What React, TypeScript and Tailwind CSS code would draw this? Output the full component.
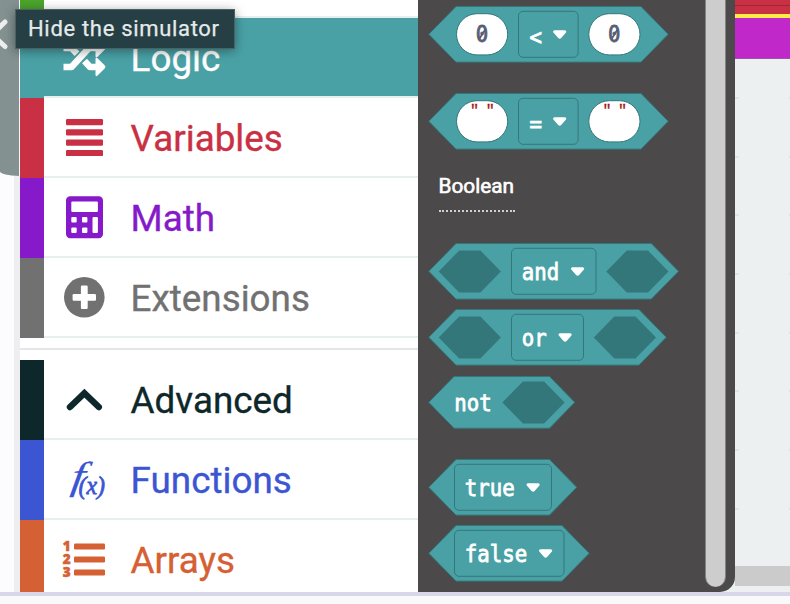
import type { ReactNode } from "react";

const TEAL = "#49a1a6";
const EDGE = "#34777b";

function Glyph({ children }: { children: ReactNode }) {
  return (
    <svg className="overflow-visible" width="44" height="44" viewBox="0 0 44 44" fill="currentColor">
      {children}
    </svg>
  );
}

function ShuffleIcon() {
  return (
    <Glyph>
      <g fill="none" stroke="currentColor" strokeWidth="6.6" strokeLinejoin="round">
        <path d="M1.500 31H9.500L27 12H36" />
        <path d="M1.500 12H9.500L15 17.800" />
        <path d="M22.500 25 28 31H36" />
      </g>
      <path d="M33.500 4q0-2 1.800-1l7.600 7.800q1.100 1.400 0 2.600l-7.600 7.600q-1.800 1-1.800-1zM33.500 23q0-2 1.800-1l7.600 7.600q1.100 1.300 0 2.600l-7.600 7.600q-1.800 1-1.800-1z" />
    </Glyph>
  );
}

function BarsIcon() {
  return (
    <Glyph>
      {[3, 13.2, 23.6, 33.9].map((y) => (
        <rect key={y} x="4" y={y} width="37" height="6.2" rx="1.2" />
      ))}
    </Glyph>
  );
}

function CalculatorIcon() {
  return (
    <Glyph>
      <rect x="4" y=".3" width="37" height="42" rx="4.200" />
      <g fill="white">
        <rect x="9.300" y="5.500" width="26.600" height="10.600" rx="1.100" />
        <rect x="9.300" y="21" width="5.400" height="5.400" rx="1" />
        <rect x="20" y="21" width="5.400" height="5.400" rx="1" />
        <rect x="9.300" y="31.600" width="5.400" height="5.400" rx="1" />
        <rect x="20" y="31.600" width="5.400" height="5.400" rx="1" />
        <rect x="30.500" y="21" width="5.400" height="16" rx="1" />
      </g>
    </Glyph>
  );
}

function PlusIcon() {
  return (
    <Glyph>
      <circle cx="22.300" cy="21.300" r="20.300" />
      <g fill="white">
        <rect x="10.600" y="18" width="23.400" height="6.800" rx="1.200" />
        <rect x="18.900" y="9.600" width="6.800" height="23.400" rx="1.200" />
      </g>
    </Glyph>
  );
}

function ChevronIcon() {
  return (
    <Glyph>
      <path d="M8 29 22.400 15.100 36.800 29" fill="none" stroke="currentColor" strokeWidth="6.400" strokeLinecap="round" />
    </Glyph>
  );
}

function FunctionIcon() {
  return (
    <Glyph>
      <g stroke="currentColor" fontFamily="'Liberation Serif', serif" fontStyle="italic">
        <text transform="translate(8 31) skewX(-8) scale(1.25 1)" fontSize="39" strokeWidth=".1">f</text>
        <text x="16.500" y="36" fontSize="26" strokeWidth=".8" textLength="26.500" lengthAdjust="spacingAndGlyphs">(x)</text>
      </g>
    </Glyph>
  );
}

function NumberedIcon() {
  return (
    <Glyph>
      {[5.4, 18.4, 31.4].map((y, i) => (
        <g key={y}>
          <rect x="12" y={y} width="31" height="6" rx="1.200" />
          <text x=".800" y={y + 8} fontSize="13.500" fontWeight="800" fontFamily="'Open Sans', sans-serif" stroke="currentColor" strokeWidth=".5">{i + 1}</text>
        </g>
      ))}
    </Glyph>
  );
}

type RowProps = { label: string; icon: ReactNode; strip: string; text: string; active?: boolean; last?: boolean };

function Row({ label, icon, strip, text, active, last }: RowProps) {
  return (
    <div className={`flex shrink-0 ${last ? "h-[72px]" : "h-20"}`}>
      <div className={`w-6 ${strip}`} />
      <div className={`flex flex-1 border-[#e9eeef] ${last ? "" : "border-b-2"} ${active ? "bg-[#49a1a6]" : ""} ${text}`}>
        <div className="flex h-20 w-20 items-center justify-center">{icon}</div>
        <div className="pl-[6.600px] text-[36.800px] leading-[82px] whitespace-nowrap [-webkit-text-stroke:0.35px_currentColor]">{label}</div>
      </div>
    </div>
  );
}

function Block({ right, height = 56.6, slope = 28, children }: { right: number; height?: number; slope?: number; children: ReactNode }) {
  const m = height / 2;
  return (
    <svg className="block shrink-0 overflow-visible" width={right} height={height}>
      <polygon
        points={`.8,${m} ${slope},.5 ${right - slope},.5 ${right - 0.8},${m} ${right - slope},${height - 0.5} ${slope},${height - 0.5}`}
        fill={TEAL}
        stroke={EDGE}
      />
      {children}
    </svg>
  );
}

function Slot({ x, y = 7.5 }: { x: number; y?: number }) {
  return <polygon fill={EDGE} points={`${x},${y + 21} ${x + 20.5},${y} ${x + 41.7},${y} ${x + 62.2},${y + 21} ${x + 41.7},${y + 42} ${x + 20.5},${y + 42}`} />;
}

function Mono({ x, y, children, fill = "white" }: { x: number; y: number; children: string; fill?: string }) {
  return (
    <text transform={`translate(${x} ${y}) scale(.9 1)`} fontSize="23" fill={fill} stroke={fill} strokeWidth=".8" fontFamily="'DejaVu Sans Mono', monospace">
      {children}
    </text>
  );
}

function Menu({ x, w, label }: { x: number; w: number; label: string }) {
  const c = x + w - 25.2;
  const symbol = label.length === 1;
  return (
    <>
      <rect x={x} y="5.3" width={w} height="46" rx="4.5" fill="none" stroke={EDGE} />
      <Mono x={x + (symbol ? 10.9 : 10.3)} y={symbol ? 38.6 : 36.5}>{label}</Mono>
      <path d={`M${c + 1.5} 24.2h10.6q2.2 1 .8 2.6l-4.6 5.300q-1.500 1.300-3 0l-4.600-5.300q-1.400-1.600.8-2.6z`} fill="white" />
    </>
  );
}

function Pill({ x, text }: { x: number; text?: boolean }) {
  return (
    <>
      <rect x={x} y="7.7" width="51.2" height="41.2" rx="20.6" fill="white" stroke={EDGE} />
      {text ? (
        <g fill="#a31515" stroke="#a31515" strokeWidth=".3" fontSize="15" fontFamily="'Liberation Mono', monospace">
          <text x={x + 13.6} y="21.500">"</text>
          <text x={x + 29.3} y="21.500">"</text>
        </g>
      ) : (
        <>
          <Mono x={x + 19.3} y={36.3} fill="#575e75">0</Mono>
          <path d={`M${x + 22.4} 33.5l7-11`} stroke="#575e75" strokeWidth="1.8" />
        </>
      )}
    </>
  );
}

const ticks = [0, 1, 2, 3, 4, 5, 6, 7];

export default function App() {
  return (
    <div className="relative h-[604px] w-[790px] overflow-hidden bg-[#f9f9f9] font-['Roboto',sans-serif]">
      <div className="flex h-[592px]">
        <div className="flex w-5 shrink-0 bg-[#fcfcff]">
          <div className="h-[176px] w-[19px] shrink-0 rounded-bl-[20px_5px] bg-[#839191]">
            <svg className="block" width="16" height="60" fill="none" stroke="#eeeeee" strokeWidth="5" strokeLinecap="round">
              <path d="M5 22-8 34.500 5 46.500" />
            </svg>
          </div>
          <div className="-ml-[5px] mt-[176px] w-1.5 shrink-0 bg-[#eeeef1]" />
        </div>
        <div className="flex w-[398px] shrink-0 flex-col bg-white">
          <div className="h-[18px] shrink-0 border-b-2 border-[#e9eeef]">
            <div className="h-[18px] w-6 bg-[#4ba42b]" />
          </div>
          <Row label="Logic" icon={<ShuffleIcon />} strip="bg-[#49a1a6]" text="text-white" active />
          <Row label="Variables" icon={<BarsIcon />} strip="bg-[#c93044]" text="text-[#c93044]" />
          <Row label="Math" icon={<CalculatorIcon />} strip="bg-[#8619c9]" text="text-[#8619c9]" />
          <Row label="Extensions" icon={<PlusIcon />} strip="bg-[#717171]" text="text-[#717171]" />
          <div className="mb-2.5 h-3 shrink-0 border-b-2 border-[#e4e6e7]" />
          <Row label="Advanced" icon={<ChevronIcon />} strip="bg-[#0d272a]" text="text-[#0d272a]" />
          <Row label="Functions" icon={<FunctionIcon />} strip="bg-[#3b55d3]" text="text-[#3b55d3]" />
          <Row label="Arrays" icon={<NumberedIcon />} strip="bg-[#d56033]" text="text-[#d56033]" last />
        </div>
        <div className="flex flex-1 bg-[#ecf0f1]">
          <div className="flex w-[317px] shrink-0 rounded-br-[15px] bg-[#4b4949]">
            <div className="flex w-[287px] flex-col pt-[6px] pl-[10px]">
              <Block right={241}>
                <Pill x={28.5} />
                <Menu x={90.5} w={59.6} label="<" />
                <Pill x={160.8} />
              </Block>
              <div className="h-[30.7px] shrink-0" />
              <Block right={241}>
                <Pill x={28.5} text />
                <Menu x={90.5} w={59.6} label="=" />
                <Pill x={160.8} text />
              </Block>
              <div className="mt-[24px] ml-[10.5px] h-[38.500px] w-[76px] shrink-0 border-b-2 border-dotted border-[#d0d0d0] text-[20.800px] leading-[24px] whitespace-nowrap text-white [-webkit-text-stroke:0.6px_white]">
                Boolean
              </div>
              <div className="h-[30.4px] shrink-0" />
              <Block right={251.3}>
                <Slot x={10.7} />
                <Menu x={83.5} w={84.5} label="and" />
                <Slot x={178.3} />
              </Block>
              <div className="h-[9.900px] shrink-0" />
              <Block right={239}>
                <Slot x={10.7} />
                <Menu x={83.5} w={72} label="or" />
                <Slot x={165.8} />
              </Block>
              <div className="h-[9.700px] shrink-0" />
              <Block right={147.5} height={52.7} slope={26}>
                <Mono x={26.3} y={34.8}>not</Mono>
                <Slot x={74.4} y={5.4} />
              </Block>
              <div className="h-[30.500px] shrink-0" />
              <Block right={149.5}>
                <Menu x={26.5} w={97} label="true" />
              </Block>
              <div className="h-[9.900px] shrink-0" />
              <Block right={162}>
                <Menu x={26.5} w={109.5} label="false" />
              </Block>
            </div>
            <div className="mb-[5px] w-[21px] rounded-b-full border-x border-[#858484] bg-[#cdcdcd]" />
          </div>
          <div className="flex flex-1 flex-col">
            <div className="h-[14px] shrink-0 bg-[#c93044] pt-[5px]">
              <div className="h-px bg-[#9b2636]" />
            </div>
            <div className="h-1 shrink-0 bg-[#ffec47]" />
            <div className="h-[41px] shrink-0 border-b border-[#9f55a7] bg-[#c128c9]" />
            <div className="flex flex-1 flex-col gap-[56.700px] pt-[38px]">
              {ticks.map((t) => (
                <div key={t} className="flex h-[2px] shrink-0 justify-between">
                  <div className="w-1 bg-[#dfe3e6]" />
                  <div className="w-px bg-[#dfe3e6]" />
                </div>
              ))}
            </div>
            <div className="mb-1.5 h-5 shrink-0 bg-[#cbcbcb]" />
          </div>
        </div>
      </div>
      <div className="h-1 bg-[#d8d7e9]" />
      <div className="absolute top-[9px] left-[15px] h-10 w-[220px] border border-[#4b6265] bg-[#263f44] pl-3 text-[22px] leading-[37px] whitespace-nowrap text-[#e5eaeb] shadow-[0_2px_10px_rgba(0,0,0,0.4)]">
        <span className="tracking-[0.68px] [-webkit-text-stroke:0.25px_currentColor]">Hide the simulator</span>
      </div>
    </div>
  );
}
